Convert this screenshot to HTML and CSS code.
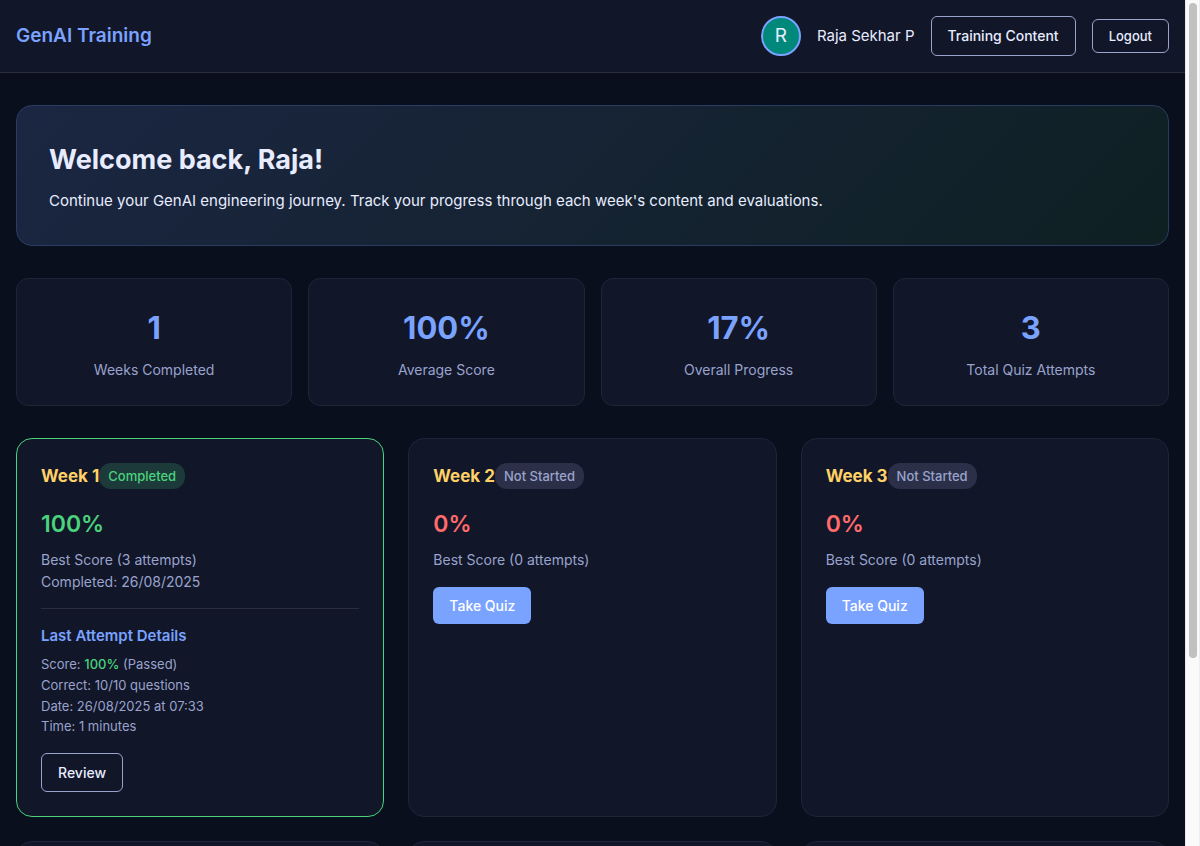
FILE: index.html
```html
<!DOCTYPE html>
<html lang="en">
<head>
<meta charset="utf-8">
<meta name="viewport" content="width=device-width, initial-scale=1">
<title>GenAI Training</title>
<link rel="stylesheet" href="styles.css">
</head>
<body>
<div class="shell">
  <div class="page">
    <header class="nav">
      <div class="brand">GenAI Training</div>
      <div class="user">
        <span class="avatar">R</span>
        <span class="user-name">Raja Sekhar P</span>
        <a class="btn btn-outline btn-nav" href="#content">Training Content</a>
        <button class="btn btn-outline btn-logout" type="button">Logout</button>
      </div>
    </header>
    <main class="content">
      <section class="welcome">
        <h1>Welcome back, Raja!</h1>
        <p>Continue your GenAI engineering journey. Track your progress through each week's content and evaluations.</p>
      </section>
      <section class="stats">
        <div class="stat"><div class="stat-value">1</div><div class="stat-label">Weeks Completed</div></div>
        <div class="stat"><div class="stat-value">100%</div><div class="stat-label">Average Score</div></div>
        <div class="stat"><div class="stat-value">17%</div><div class="stat-label">Overall Progress</div></div>
        <div class="stat"><div class="stat-value">3</div><div class="stat-label">Total Quiz Attempts</div></div>
      </section>
      <section class="weeks">
        <article class="week week-done">
          <div class="week-head"><h2>Week 1</h2><span class="badge badge-done">Completed</span></div>
          <div class="score score-pass">100%</div>
          <div class="meta">Best Score (3 attempts)</div>
          <div class="meta">Completed: 26/08/2025</div>
          <div class="attempt">
            <h3>Last Attempt Details</h3>
            <div class="attempt-lines">
              <div>Score: <span class="pass">100%</span> (Passed)</div>
              <div>Correct: 10/10 questions</div>
              <div>Date: 26/08/2025 at 07:33</div>
              <div>Time: 1 minutes</div>
            </div>
          </div>
          <a class="btn btn-outline btn-review" href="#review">Review</a>
        </article>
        <article class="week">
          <div class="week-head"><h2>Week 2</h2><span class="badge">Not Started</span></div>
          <div class="score score-none">0%</div>
          <div class="meta">Best Score (0 attempts)</div>
          <button class="btn btn-primary" type="button">Take Quiz</button>
        </article>
        <article class="week">
          <div class="week-head"><h2>Week 3</h2><span class="badge">Not Started</span></div>
          <div class="score score-none">0%</div>
          <div class="meta">Best Score (0 attempts)</div>
          <button class="btn btn-primary" type="button">Take Quiz</button>
        </article>
        <article class="week week-next"></article>
        <article class="week week-next"></article>
        <article class="week week-next"></article>
      </section>
    </main>
  </div>
  <div class="scroll-track"><div class="scroll-thumb"></div></div>
</div>
</body>
</html>
```
FILE: styles.css
```css
:root {
  --bg: #0a0f1e;
  --panel: #111629;
  --line: #1f2437;
  --text: #e8ecff;
  --muted: #9aa3cc;
  --accent: #7aa2ff;
  --green: #4ad37c;
  --yellow: #ffd166;
  --red: #ff6b6b;
}

* {
  box-sizing: border-box;
}

body {
  margin: 0;
  background: var(--bg);
  color: var(--text);
  font-family: Inter, "Liberation Sans", sans-serif;
  font-size: 15px;
  line-height: 1.6;
}

h1, h2, h3, p {
  margin: 0;
}

.shell {
  display: flex;
  height: 100vh;
  overflow: hidden;
}

.page {
  flex: 1;
  min-width: 0;
  overflow: hidden;
}

.nav {
  display: flex;
  align-items: center;
  justify-content: space-between;
  padding: 16px;
  background: var(--panel);
  border-bottom: 1px solid #292d3f;
}

.brand {
  color: var(--accent);
  font-size: 19px;
  font-weight: 600;
}

.user {
  display: flex;
  align-items: center;
  gap: 16px;
}

.avatar {
  display: flex;
  align-items: center;
  justify-content: center;
  width: 40px;
  height: 40px;
  border: 2px solid var(--accent);
  border-radius: 50%;
  background: #00897b;
  font-size: 19px;
}

.btn {
  display: inline-block;
  border: 1px solid transparent;
  border-radius: 6px;
  padding: 0 16px;
  font-family: inherit;
  font-size: 14px;
  font-weight: 500;
  text-decoration: none;
  cursor: pointer;
}

.btn-outline {
  background: transparent;
  border-color: var(--muted);
  color: var(--text);
}

.btn-nav {
  line-height: 38px;
}

.btn-logout {
  font-size: 13px;
  line-height: 32px;
}

.btn-review {
  margin-top: 16px;
  line-height: 37px;
}

.btn-primary {
  margin-top: 16px;
  padding: 0 16px;
  border: 0;
  background: var(--accent);
  color: #ffffff;
  line-height: 37px;
}

.content {
  padding: 32px 16px;
}

.welcome {
  padding: 32px;
  border: 1px solid #2a3c62;
  border-radius: 16px;
  background: linear-gradient(135deg, #1b2642, #0f2023);
}

.welcome h1 {
  margin-bottom: 6px;
  font-size: 27px;
  font-weight: 700;
  line-height: 44px;
}

.welcome p {
  line-height: 25px;
}

.stats {
  display: grid;
  grid-template-columns: repeat(4, 1fr);
  gap: 16px;
  margin: 32px 0;
}

.stat {
  padding: 24px;
  border: 1px solid var(--line);
  border-radius: 12px;
  background: var(--panel);
  text-align: center;
}

.stat-value {
  margin-bottom: 6px;
  color: var(--accent);
  font-size: 31px;
  font-weight: 700;
  line-height: 50px;
}

.stat-label {
  color: var(--muted);
  font-size: 14px;
  line-height: 22px;
}

.weeks {
  display: grid;
  grid-template-columns: repeat(3, 1fr);
  gap: 24px;
}

.week {
  padding: 24px;
  border: 1px solid var(--line);
  border-radius: 16px;
  background: var(--panel);
}

.week-done {
  border-color: var(--green);
}

.week-next {
  min-height: 200px;
}

.week-head {
  display: flex;
  align-items: center;
  margin-bottom: 16px;
}

.week-head h2 {
  color: var(--yellow);
  font-size: 17px;
  font-weight: 700;
  line-height: 26px;
}

.badge {
  padding: 0 9px;
  border-radius: 12px;
  background: #2b3048;
  color: var(--muted);
  font-size: 13px;
  font-weight: 500;
  line-height: 26px;
}

.badge-done {
  background: #1c3a3a;
  color: var(--green);
}

.score {
  margin-bottom: 6px;
  font-size: 23px;
  font-weight: 600;
  line-height: 38px;
}

.score-pass, .pass {
  color: var(--green);
}

.score-none {
  color: var(--red);
}

.meta {
  color: var(--muted);
  font-size: 14px;
  line-height: 22px;
}

.attempt {
  margin-top: 15px;
  padding-top: 16px;
  border-top: 1px solid #292d3f;
}

.attempt h3 {
  margin-bottom: 7px;
  color: var(--accent);
  font-size: 15px;
  font-weight: 600;
  line-height: 22px;
}

.attempt-lines {
  color: var(--muted);
  font-size: 13px;
}

.pass {
  font-weight: 500;
}

.scroll-track {
  flex: 0 0 15px;
  padding: 3px 2px 3px 3px;
  border-left: 1px solid #e8e8e8;
  border-right: 1px solid #ededed;
  background: #fafafa;
}

.scroll-thumb {
  height: 78%;
  border-radius: 4px;
  background: #c1c1c1;
}
```
